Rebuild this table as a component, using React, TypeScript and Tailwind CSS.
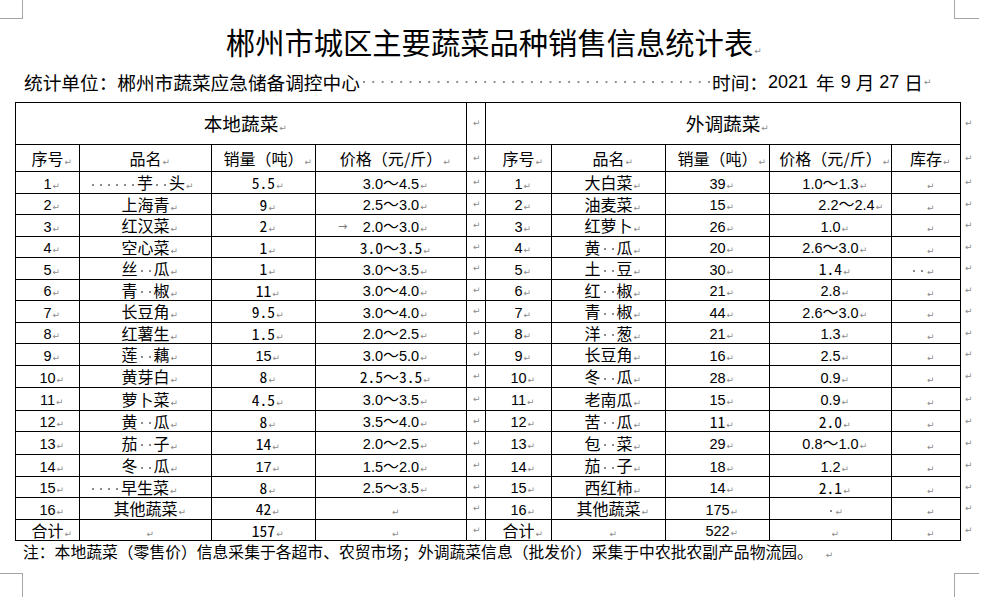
import React from "react";

const CJK = "font-['Noto_Sans_CJK_SC',sans-serif]";

function Ret() {
  return (
    <span className="inline-block w-[8px] pl-[1px] text-left text-[9px] leading-none text-[#8a8a8a] font-['DejaVu_Sans',sans-serif]">
      ↵
    </span>
  );
}

function Sp() {
  return (
    <span className="inline-block w-[8px] h-[2px] align-middle bg-[linear-gradient(to_right,transparent_3px,#8c8c8c_3px,#8c8c8c_5px,transparent_5px)]" />
  );
}

function NumParts({ v, kind }: { v: string; kind: "c" | "s" }) {
  const parts = v.split("～");
  const cls =
    kind === "c"
      ? "font-['Liberation_Sans',sans-serif] text-[14.5px]"
      : "font-['Noto_Sans_Mono_CJK_SC','Liberation_Mono',monospace] text-[15.5px]";
  return (
    <>
      {parts.map((p, i) => (
        <React.Fragment key={i}>
          {i > 0 && <span className={`${CJK} text-[16px]`}>～</span>}
          <span className={cls}>{p}</span>
        </React.Fragment>
      ))}
    </>
  );
}

function Cjk({ v }: { v: string }) {
  return (
    <>
      {v.split("").map((ch, i) =>
        ch === "_" ? <Sp key={i} /> : <React.Fragment key={i}>{ch}</React.Fragment>
      )}
    </>
  );
}

// pl-[8px] balances the paragraph mark so the text itself stays centred
function Content({ v }: { v: string }) {
  let body: React.ReactNode = null;
  if (v.startsWith("c:")) body = <NumParts v={v.slice(2)} kind="c" />;
  else if (v.startsWith("s:")) body = <NumParts v={v.slice(2)} kind="s" />;
  else body = <Cjk v={v} />;
  return (
    <span className="whitespace-nowrap leading-none pl-[8px]">
      {body}
      <Ret />
    </span>
  );
}

type Row = string[];

const local: Row[] = [
  ["c:1", "______芋__头", "s:5.5", "c:3.0～4.5"],
  ["c:2", "上海青", "s:9", "c:2.5～3.0"],
  ["c:3", "红汉菜", "s:2", "c:2.0～3.0"],
  ["c:4", "空心菜", "s:1", "s:3.0～3.5"],
  ["c:5", "丝__瓜", "s:1", "c:3.0～3.5"],
  ["c:6", "青__椒", "s:11", "c:3.0～4.0"],
  ["c:7", "长豆角", "s:9.5", "c:3.0～4.0"],
  ["c:8", "红薯生", "s:1.5", "c:2.0～2.5"],
  ["c:9", "莲__藕", "c:15", "c:3.0～5.0"],
  ["c:10", "黄芽白", "s:8", "s:2.5～3.5"],
  ["c:11", "萝卜菜", "s:4.5", "c:3.0～3.5"],
  ["c:12", "黄__瓜", "s:8", "c:3.5～4.0"],
  ["c:13", "茄__子", "s:14", "c:2.0～2.5"],
  ["c:14", "冬__瓜", "c:17", "c:1.5～2.0"],
  ["c:15", "____早生菜", "s:8", "c:2.5～3.5"],
  ["c:16", "其他蔬菜", "s:42", ""],
  ["合计", "", "s:157", ""],
];

const remote: Row[] = [
  ["c:1", "大白菜", "c:39", "c:1.0～1.3", ""],
  ["c:2", "油麦菜", "c:15", "c:2.2～2.4", ""],
  ["c:3", "红萝卜", "c:26", "c:1.0", ""],
  ["c:4", "黄__瓜", "c:20", "c:2.6～3.0", ""],
  ["c:5", "土__豆", "c:30", "s:1.4", "__"],
  ["c:6", "红__椒", "c:21", "c:2.8", ""],
  ["c:7", "青__椒", "c:44", "c:2.6～3.0", ""],
  ["c:8", "洋__葱", "c:21", "c:1.3", ""],
  ["c:9", "长豆角", "c:16", "c:2.5", ""],
  ["c:10", "冬__瓜", "c:28", "c:0.9", ""],
  ["c:11", "老南瓜", "c:15", "c:0.9", ""],
  ["c:12", "苦__瓜", "s:11", "s:2.0", ""],
  ["c:13", "包__菜", "c:29", "c:0.8～1.0", ""],
  ["c:14", "茄__子", "c:18", "c:1.2", ""],
  ["c:15", "西红柿", "c:14", "s:2.1", ""],
  ["c:16", "其他蔬菜", "c:175", "_", ""],
  ["合计", "", "c:522", "", ""],
];

// inner heights per data row (row pitch minus 1px border)
const rowH = [
  "h-[21px]", "h-[20px]", "h-[21px]", "h-[20px]", "h-[21px]", "h-[20px]",
  "h-[21px]", "h-[20px]", "h-[21px]", "h-[21px]", "h-[22px]", "h-[20px]",
  "h-[22px]", "h-[21px]", "h-[20px]", "h-[21px]", "h-[20px]",
];

const td = "border border-black p-0 align-middle";

function justify(side: "l" | "r", ri: number, ci: number): string {
  if (side === "l" && ci === 1 && (ri === 0 || ri === 14)) return "justify-start pl-[1px]";
  if (side === "r" && ci === 3 && ri === 1) return "justify-center pl-[32px]";
  if (side === "r" && ci === 4 && ri === 4) return "justify-center pr-[16px]";
  return "justify-center";
}

function Cell({ h, className, children }: { h: string; className?: string; children: React.ReactNode }) {
  return <div className={`${h} flex items-center ${className ?? "justify-center"}`}>{children}</div>;
}

export default function App() {
  const headers2 = ["序号", "品名", "销量（吨）", "价格（元/斤）"];
  return (
    <div className={`relative w-[991px] h-[597px] bg-white overflow-hidden text-black ${CJK}`}>
      {/* page corner marks */}
      <div className="absolute left-0 top-0 w-[23px] h-[19px] border-r border-b border-[#a6a6a6]" />
      <div className="absolute left-[954px] top-0 w-[25px] h-[19px] border-l border-b border-[#a6a6a6]" />
      <div className="absolute left-0 top-[573px] w-[23px] h-[24px] border-r border-t border-[#a6a6a6]" />
      <div className="absolute left-[954px] top-[573px] w-[25px] h-[24px] border-l border-t border-[#a6a6a6]" />

      <div className="ml-[15px] w-[949px] pt-[25px] h-[57px] text-center text-[29.3px] leading-[32px] whitespace-nowrap">
        <span className="pl-[8px]">
          郴州市城区主要蔬菜品种销售信息统计表
          <Ret />
        </span>
      </div>

      <div className="mt-[15px] h-[20px] w-[931px] pl-[24px] flex items-center text-[18.67px] leading-[20px]">
        <span className="whitespace-nowrap">统计单位：郴州市蔬菜应急储备调控中心</span>
        <span className="flex-1 h-[2px] mx-[2px] bg-[linear-gradient(to_right,#8c8c8c_2px,transparent_2px)] bg-[length:9.33px_2px] bg-repeat-x bg-[position:1px_0]" />
        <span className="whitespace-nowrap flex items-center">
          时间：
          <span className="font-['Liberation_Sans',sans-serif] text-[18px]">2021</span>
          <span className="ml-[8px] mr-[6px]">年</span>
          <span className="font-['Liberation_Sans',sans-serif] text-[18px]">9</span>
          <span className="mx-[5px]">月</span>
          <span className="font-['Liberation_Sans',sans-serif] text-[18px]">27</span>
          <span className="ml-[5px]">日</span>
          <Ret />
        </span>
      </div>

      <table className="mt-[10px] ml-[15px] w-[970px] border-collapse table-fixed text-[16px] leading-none">
        <colgroup>
          <col className="w-[64px]" />
          <col className="w-[132px]" />
          <col className="w-[104px]" />
          <col className="w-[151px]" />
          <col className="w-[19px]" />
          <col className="w-[66px]" />
          <col className="w-[114px]" />
          <col className="w-[104px]" />
          <col className="w-[122px]" />
          <col className="w-[69px]" />
          <col className="w-[25px]" />
        </colgroup>
        <tbody>
          <tr>
            <td colSpan={4} className={`${td} text-[18.67px]`}>
              <Cell h="h-[41px]">
                <Content v="本地蔬菜" />
              </Cell>
            </td>
            <td className={td}>
              <Cell h="h-[41px]">
                <Ret />
              </Cell>
            </td>
            <td colSpan={5} className={`${td} text-[18.67px]`}>
              <Cell h="h-[41px]">
                <Content v="外调蔬菜" />
              </Cell>
            </td>
            <td className="p-0 align-middle">
              <Cell h="h-[41px]" className="justify-start pl-[3px]">
                <Ret />
              </Cell>
            </td>
          </tr>
          <tr>
            {headers2.map((h) => (
              <td key={"l" + h} className={td}>
                <Cell h="h-[26px]">
                  <Content v={h} />
                </Cell>
              </td>
            ))}
            <td className={td}>
              <Cell h="h-[26px]">
                <Ret />
              </Cell>
            </td>
            {[...headers2, "库存"].map((h) => (
              <td key={"r" + h} className={td}>
                <Cell h="h-[26px]">
                  <Content v={h} />
                </Cell>
              </td>
            ))}
            <td className="p-0 align-middle">
              <Cell h="h-[26px]" className="justify-start pl-[3px]">
                <Ret />
              </Cell>
            </td>
          </tr>
          {local.map((lr, ri) => {
            const rr = remote[ri];
            const h = rowH[ri];
            return (
              <tr key={ri}>
                {lr.map((v, ci) => (
                  <td key={"l" + ci} className={td}>
                    <Cell h={h} className={`${justify("l", ri, ci)}${ri === 2 && ci === 3 ? " relative" : ""}`}>
                      {ri === 2 && ci === 3 && (
                        <span className="absolute left-[22px] top-1/2 -translate-y-1/2 text-[11px] leading-none text-[#7a7a7a] font-['DejaVu_Sans',sans-serif]">
                          →
                        </span>
                      )}
                      <Content v={v} />
                    </Cell>
                  </td>
                ))}
                <td className={td}>
                  <Cell h={h}>
                    <Ret />
                  </Cell>
                </td>
                {rr.map((v, ci) => (
                  <td key={"r" + ci} className={td}>
                    <Cell h={h} className={justify("r", ri, ci)}>
                      <Content v={v} />
                    </Cell>
                  </td>
                ))}
                <td className="p-0 align-middle">
                  <Cell h={h} className="justify-start pl-[3px]">
                    <Ret />
                  </Cell>
                </td>
              </tr>
            );
          })}
        </tbody>
      </table>

      <div className="pl-[23px] h-[22px] leading-[22px] text-[15.8px] whitespace-nowrap">
        注：本地蔬菜（零售价）信息采集于各超市、农贸市场；外调蔬菜信息（批发价）采集于中农批农副产品物流园。
        <span className="ml-[12px]">
          <Ret />
        </span>
      </div>
    </div>
  );
}
